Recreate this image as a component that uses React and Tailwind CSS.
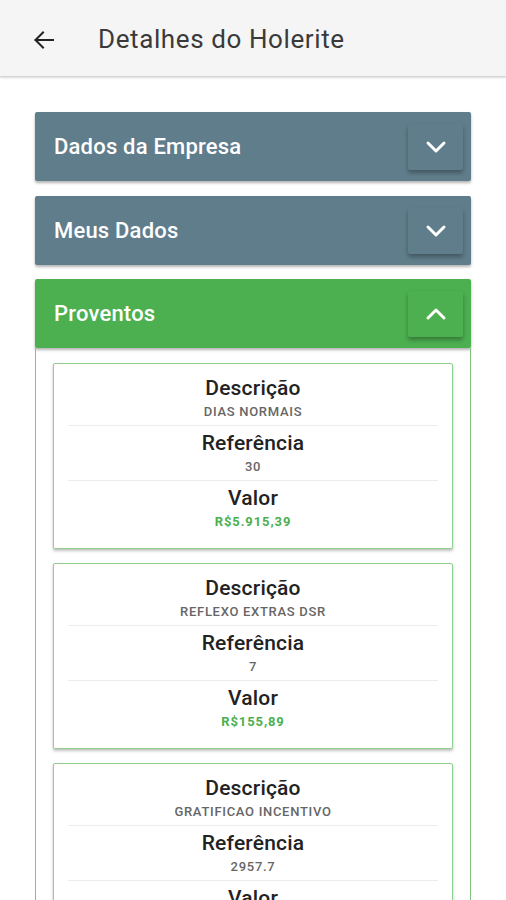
import React from "react";

const Chevron = ({ up }) => (
  <svg width="22" height="14" viewBox="0 0 22 14" fill="none">
    <polyline
      points={up ? "3,11 11,3 19,11" : "3,3 11,11 19,3"}
      stroke="white"
      strokeWidth="3"
      strokeLinecap="round"
      strokeLinejoin="round"
    />
  </svg>
);

const Panel = ({ title, color, up }) => (
  <div
    className={`h-[69px] rounded-[2px] flex items-center justify-between pl-[19px] pr-[8px] shadow-[0_2px_3px_rgba(0,0,0,0.3)] ${color}`}
  >
    <span className="text-white text-[22px] font-medium tracking-[0.2px]">{title}</span>
    <div className="w-[55px] h-[46px] flex items-center justify-center rounded-[2px] shadow-[0_3px_4px_rgba(0,0,0,0.3)]">
      <Chevron up={up} />
    </div>
  </div>
);

const Section = ({ label, value, green, last }) => (
  <div className={`py-[5px] flex flex-col items-center ${last ? "" : "border-b border-[#ececec]"}`}>
    <div className="h-[24px] leading-[24px] text-[21px] font-medium text-[#222] tracking-[0.2px]">{label}</div>
    <div
      className={`mt-[4px] h-[16px] leading-[16px] text-[13px] ${
        green ? "text-[#4caf50] font-bold tracking-[0.9px]" : "text-[#666] font-medium tracking-[0.7px]"
      }`}
    >
      {value}
    </div>
  </div>
);

const Card = ({ desc, ref_, valor }) => (
  <div className="border border-[#8fcf8f] rounded-[2px] bg-white pt-[7px] pb-[13px] px-[14px] shadow-[0_2px_3px_rgba(0,0,0,0.25)]">
    <Section label="Descrição" value={desc} />
    <Section label="Referência" value={ref_} />
    <Section label="Valor" value={valor} green last />
  </div>
);

export default function App() {
  return (
    <div
      className="w-[506px] h-[900px] overflow-hidden bg-white"
      style={{ fontFamily: "Roboto, 'Noto Sans', sans-serif" }}
    >
      <div className="h-[77px] bg-[#f5f5f5] flex items-center pt-[3px] border-b border-[#d6d6d6] shadow-[0_1px_2px_rgba(0,0,0,0.15)]">
        <div className="w-[98px] flex items-center pl-[32px]">
          <svg width="24" height="24" viewBox="0 0 24 24" fill="none">
            <path d="M21 12H3.5M11 4.5L3.5 12L11 19.5" stroke="#222" strokeWidth="2" strokeLinecap="square" />
          </svg>
        </div>
        <span className="text-[26px] text-[#3a3a3a] tracking-[0.6px]">Detalhes do Holerite</span>
      </div>

      <div className="pt-[35px] px-[35px] flex flex-col gap-[15px]">
        <Panel title="Dados da Empresa" color="bg-[#607d8b]" />
        <Panel title="Meus Dados" color="bg-[#607d8b]" />
        <div className="rounded-[2px] -mt-[1px]">
          <Panel title="Proventos" color="bg-[#4caf50]" up />
          <div className="border-x border-[#7fc57f] px-[17px] pt-[15px] flex flex-col gap-[14px]">
            <Card desc="DIAS NORMAIS" ref_="30" valor="R$5.915,39" />
            <Card desc="REFLEXO EXTRAS DSR" ref_="7" valor="R$155,89" />
            <Card desc="GRATIFICAO INCENTIVO" ref_="2957.7" valor="R$2.957,70" />
          </div>
        </div>
      </div>
    </div>
  );
}
